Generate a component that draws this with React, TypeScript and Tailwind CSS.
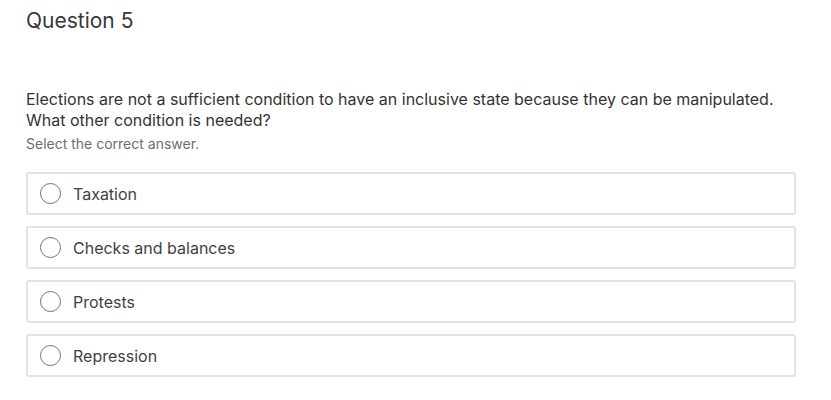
const options = ["Taxation", "Checks and balances", "Protests", "Repression"];

function Radio() {
  return (
    <span className="w-[21px] h-[21px] rounded-full border border-[#727272] bg-white shrink-0" />
  );
}

export default function App() {
  return (
    <div
      className="w-[831px] h-[400px] bg-white text-[#333333] pl-[26px] pr-[35px]"
      style={{ fontFamily: "Inter, 'Noto Sans', sans-serif" }}
    >
      <h1 className="pt-[7px] text-[21px] leading-[28px] text-[#383838]">Question 5</h1>
      <div className="mt-[54px] text-[16px] leading-[21px] text-[#333333]">
        Elections are not a sufficient condition to have an inclusive state because they can be
        manipulated. What other condition is needed?
      </div>
      <div className="mt-[4px] text-[14px] leading-[18px] text-[#6e6e6e]">Select the correct answer.</div>
      <div className="mt-[19px] flex flex-col gap-[11px]">
        {options.map((o) => (
          <label
            key={o}
            className="h-[43px] flex items-center gap-[12px] pl-[12px] border-2 border-[#e3e3e3] rounded-[3px] text-[16px] text-[#3f3f3f]"
          >
            <Radio />
            {o}
          </label>
        ))}
      </div>
    </div>
  );
}
